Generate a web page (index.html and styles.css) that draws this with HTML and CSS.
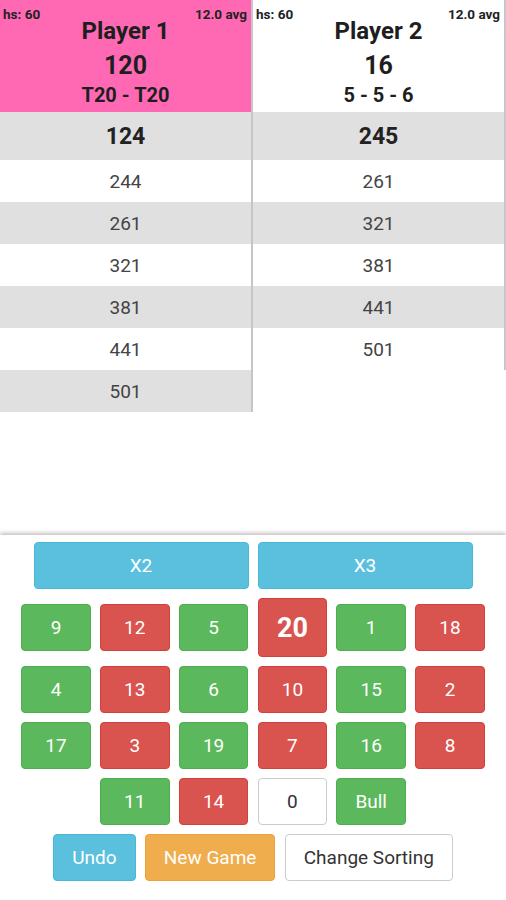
FILE: index.html
```html
<!DOCTYPE html>
<html>
<head>
<meta charset="utf-8">
<link rel="stylesheet" href="styles.css">
</head>
<body>
<div class="app">
  <div class="board">
    <div class="player p1">
      <div class="head active">
        <span class="hs">hs: 60</span><span class="avg">12.0 avg</span>
        <div class="name">Player 1</div>
        <div class="score">120</div>
        <div class="checkout">T20 - T20</div>
      </div>
      <div class="row first shade">124</div>
      <div class="row">244</div>
      <div class="row shade">261</div>
      <div class="row">321</div>
      <div class="row shade">381</div>
      <div class="row">441</div>
      <div class="row shade">501</div>
    </div>
    <div class="player p2">
      <div class="head">
        <span class="hs">hs: 60</span><span class="avg">12.0 avg</span>
        <div class="name">Player 2</div>
        <div class="score">16</div>
        <div class="checkout">5 - 5 - 6</div>
      </div>
      <div class="row first shade">245</div>
      <div class="row">261</div>
      <div class="row shade">321</div>
      <div class="row">381</div>
      <div class="row shade">441</div>
      <div class="row">501</div>
    </div>
  </div>
  <div class="keypad">
    <div class="krow">
      <button class="btn info wide">X2</button>
      <button class="btn info wide">X3</button>
    </div>
    <div class="krow">
      <button class="btn num green">9</button>
      <button class="btn num red">12</button>
      <button class="btn num green">5</button>
      <button class="btn num red big">20</button>
      <button class="btn num green">1</button>
      <button class="btn num red">18</button>
    </div>
    <div class="krow">
      <button class="btn num green">4</button>
      <button class="btn num red">13</button>
      <button class="btn num green">6</button>
      <button class="btn num red">10</button>
      <button class="btn num green">15</button>
      <button class="btn num red">2</button>
    </div>
    <div class="krow">
      <button class="btn num green">17</button>
      <button class="btn num red">3</button>
      <button class="btn num green">19</button>
      <button class="btn num red">7</button>
      <button class="btn num green">16</button>
      <button class="btn num red">8</button>
    </div>
    <div class="krow">
      <button class="btn num green">11</button>
      <button class="btn num red">14</button>
      <button class="btn num plain">0</button>
      <button class="btn num green">Bull</button>
    </div>
    <div class="krow">
      <button class="btn info act">Undo</button>
      <button class="btn warn act">New Game</button>
      <button class="btn plain act">Change Sorting</button>
    </div>
  </div>
</div>
</body>
</html>
```

FILE: styles.css
```css
* { box-sizing: border-box; }
html, body { margin: 0; padding: 0; background: #fff; }
body { font-family: Roboto, "Noto Sans", sans-serif; color: #222; }

.app {
  height: 100vh;
  display: flex;
  flex-direction: column;
}

.board {
  flex: 1;
  display: flex;
  align-items: flex-start;
}

.player { display: flex; flex-direction: column; }
.p1 { width: 253px; border-right: 2px solid #c6c6c6; }
.p2 { flex: 1; border-right: 2px solid #c6c6c6; }

.head {
  position: relative;
  height: 112px;
  padding-top: 17px;
  display: flex;
  flex-direction: column;
  align-items: center;
  color: #1e1e1e;
  background: #fff;
}
.head.active { background: #ff69b4; }

.hs, .avg {
  position: absolute;
  top: 6px;
  font-size: 13.5px;
  line-height: 16px;
  font-weight: 700;
  color: #222;
}
.hs { left: 3px; }
.avg { right: 4px; }

.name { font-size: 24px; line-height: 28px; font-weight: 700; }
.score { font-size: 25px; line-height: 42px; font-weight: 700; }
.checkout { font-size: 20px; line-height: 16px; font-weight: 700; }

.row {
  height: 42px;
  display: flex;
  align-items: center;
  justify-content: center;
  font-size: 19px;
  color: #444;
  background: #fff;
}
.row.shade { background: #e0e0e0; }
.row.first {
  height: 48px;
  font-size: 23px;
  font-weight: 700;
  color: #222;
}

.keypad {
  display: flex;
  flex-direction: column;
  gap: 9px;
  padding: 7px 0 19px;
  box-shadow: 0 -2px 4px rgba(0, 0, 0, 0.25);
  background: #fff;
}

.krow {
  display: flex;
  justify-content: center;
  align-items: center;
  gap: 9.3px;
}

.btn {
  height: 47px;
  display: flex;
  align-items: center;
  justify-content: center;
  border-radius: 4px;
  border: 1px solid transparent;
  font-family: Roboto, "Noto Sans", sans-serif;
  font-size: 19px;
  font-weight: 400;
  color: #fff;
  padding: 0;
  margin: 0;
}

.wide { width: 215px; }
.krow:first-child { gap: 9px; }
.num { width: 69.5px; }
.big { height: 59px; font-size: 27px; font-weight: 700; }
.act { padding: 0 18px; }

.green { background: #5cb85c; border-color: #4cae4c; }
.red { background: #d9534f; border-color: #d43f3a; }
.info { background: #5bc0de; border-color: #46b8da; }
.warn { background: #f0ad4e; border-color: #eea236; }
.plain { background: #fff; border-color: #ccc; color: #333; }
```
